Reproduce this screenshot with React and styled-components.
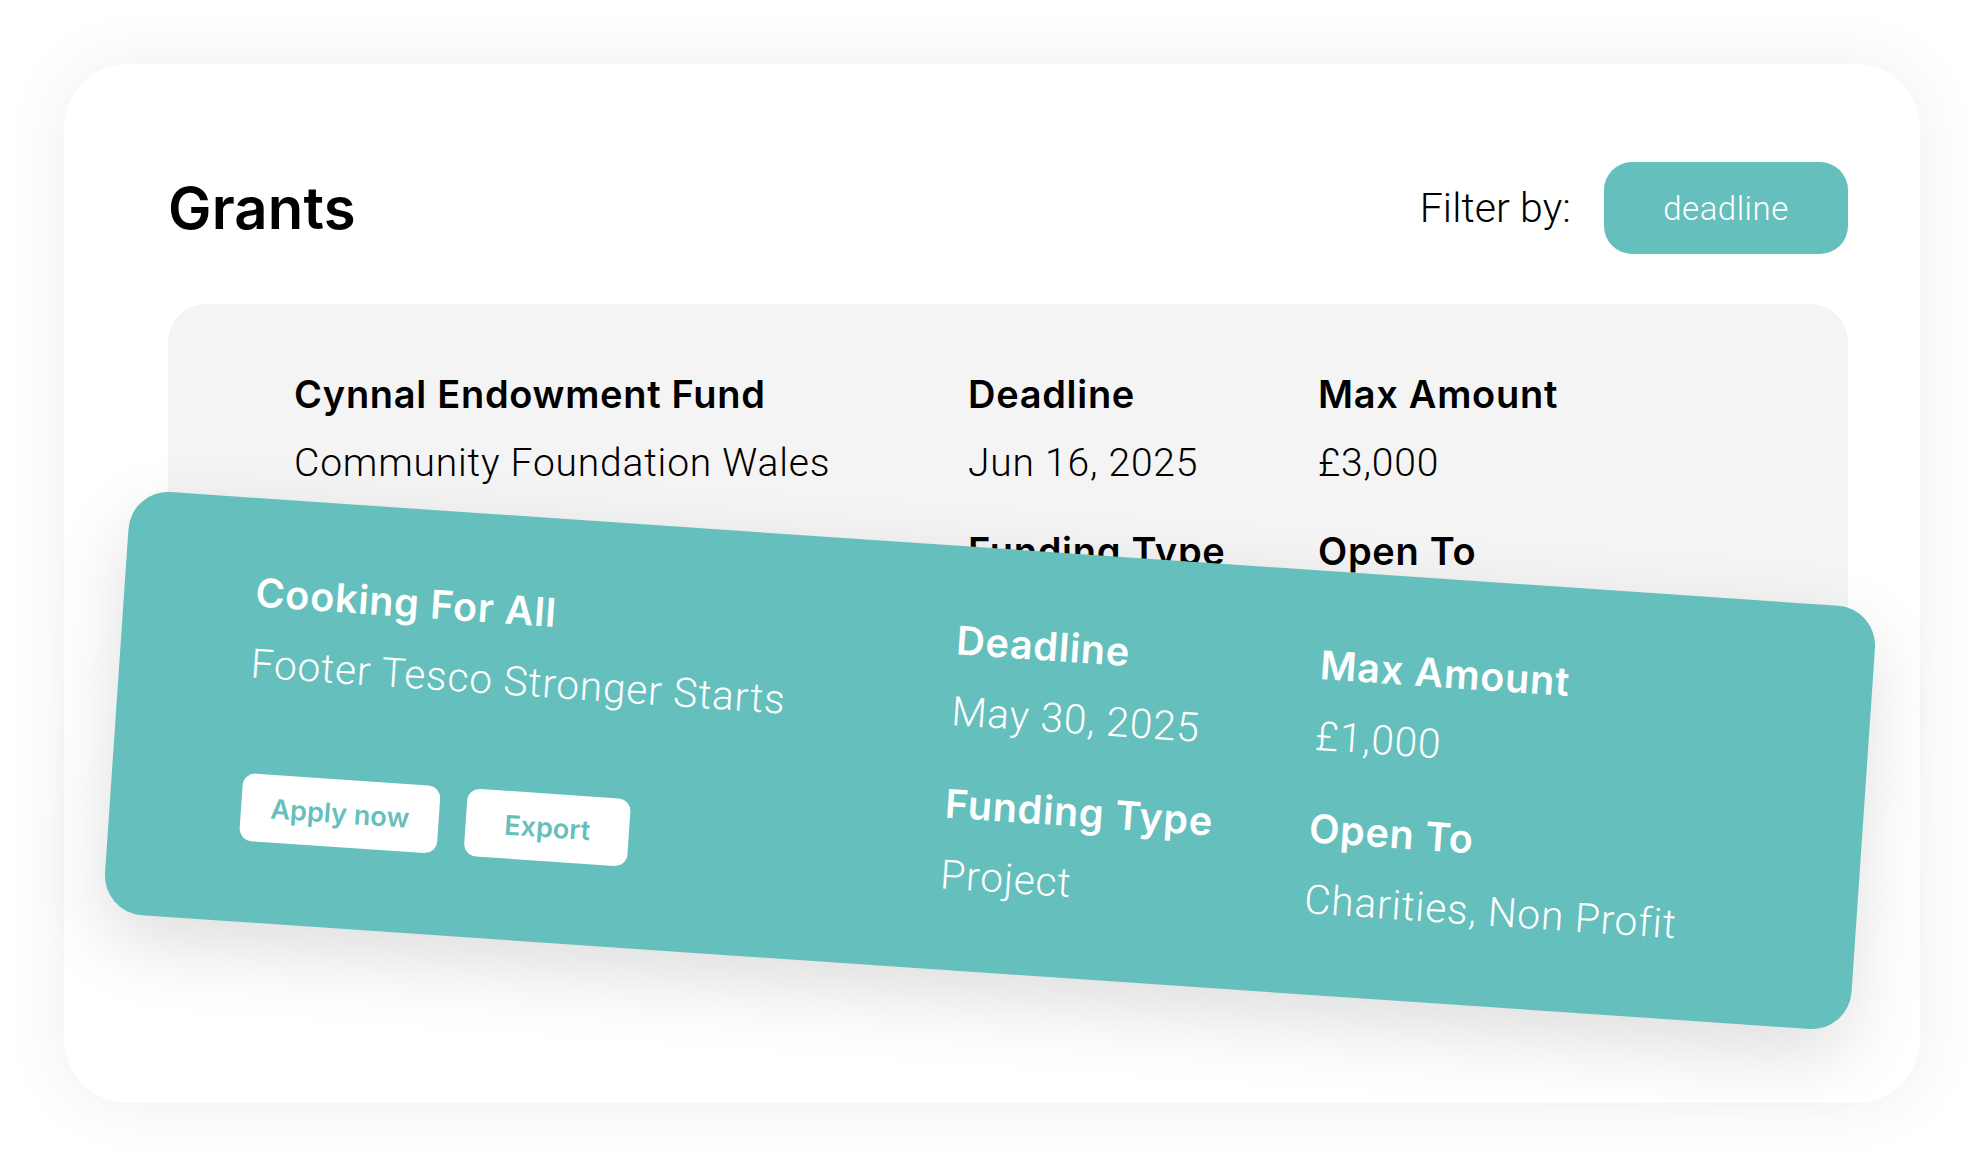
import styled, { createGlobalStyle, css } from 'styled-components';

const TEAL = '#65bfbc';
const LIGHT_FONT = 'Roboto, "Noto Sans", sans-serif';

const GlobalStyle = createGlobalStyle`
	html, body {
		margin: 0;
		padding: 0;
		background: #fff;
	}
	body {
		font-family: Inter, "Noto Sans", sans-serif;
		-webkit-font-smoothing: antialiased;
	}
	* {
		box-sizing: border-box;
	}
`;

const Page = styled.div`
	padding: 64px;
	width: 100%;
	min-height: 100vh;
`;

const Panel = styled.section`
	height: 1039px;
	background: #fff;
	border-radius: 64px;
	box-shadow: 0 0 64px rgba(40, 52, 90, 0.08);
	padding: 98px 72px 0 104px;
`;

const Header = styled.header`
	display: flex;
	align-items: center;
	justify-content: space-between;
	height: 92px;
	margin-bottom: 50px;
`;

const Title = styled.h1`
	margin: 0;
	font-size: 58px;
	font-weight: 600;
	letter-spacing: 0.2px;
	color: #000;
`;

const Filter = styled.div`
	display: flex;
	align-items: center;
	gap: 33px;
`;

const FilterLabel = styled.span`
	font-family: ${LIGHT_FONT};
	font-size: 41px;
	font-weight: 300;
	letter-spacing: 0.1px;
	color: #000;
`;

const FilterButton = styled.button`
	width: 244px;
	height: 92px;
	border: 0;
	border-radius: 28px;
	background: ${TEAL};
	color: #fff;
	font-family: ${LIGHT_FONT};
	font-size: 33px;
	font-weight: 300;
	letter-spacing: 0.5px;
	cursor: pointer;
`;

const List = styled.div`
	display: flex;
	flex-direction: column;
`;

const Card = styled.article`
	display: grid;
	grid-template-columns: 674px 350px 1fr;
	padding: 62px 0 62px 126px;
	border-radius: 38px;
	background: #f4f4f4;
	color: #000;

	${(p) =>
		p.$active &&
		css`
			margin-top: -154px;
			background: ${TEAL};
			color: #fff;
			transform: translateX(-18px) rotate(3.9deg) scale(1.042);
			box-shadow: 0 26px 70px rgba(0, 0, 0, 0.13);
		`}
`;

const Column = styled.div`
	display: flex;
	flex-direction: column;
	gap: 31px;
`;

const Field = styled.div`
	display: flex;
	flex-direction: column;
	gap: 12px;
`;

const Label = styled.div`
	font-size: 38px;
	line-height: 57px;
	font-weight: 600;
	letter-spacing: 0.7px;
	white-space: nowrap;
`;

const Value = styled.div`
	font-family: ${LIGHT_FONT};
	font-size: 39px;
	line-height: 57px;
	font-weight: 300;
	letter-spacing: 0.8px;
	white-space: nowrap;
`;

const Actions = styled.div`
	display: flex;
	gap: 26px;
	margin-top: 64px;
`;

const ActionButton = styled.button`
	width: ${(p) => p.$width}px;
	height: 65px;
	border: 0;
	border-radius: 12px;
	background: #fff;
	color: ${TEAL};
	font-family: inherit;
	font-size: 26px;
	font-weight: 600;
	cursor: pointer;
`;

const grants = [
	{
		name: 'Cynnal Endowment Fund',
		funder: 'Community Foundation Wales',
		deadline: 'Jun 16, 2025',
		amount: '£3,000',
		type: 'Project',
		openTo: 'Charities'
	},
	{
		name: 'Cooking For All',
		funder: 'Footer Tesco Stronger Starts',
		deadline: 'May 30, 2025',
		amount: '£1,000',
		type: 'Project',
		openTo: 'Charities, Non Profit',
		active: true
	}
];

const GrantCard = ({ grant }) => (
	<Card $active={grant.active}>
		<Field>
			<Label>{grant.name}</Label>
			<Value>{grant.funder}</Value>
			<Actions>
				<ActionButton $width={190}>Apply now</ActionButton>
				<ActionButton $width={157}>Export</ActionButton>
			</Actions>
		</Field>
		<Column>
			<Field>
				<Label>Deadline</Label>
				<Value>{grant.deadline}</Value>
			</Field>
			<Field>
				<Label>Funding Type</Label>
				<Value>{grant.type}</Value>
			</Field>
		</Column>
		<Column>
			<Field>
				<Label>Max Amount</Label>
				<Value>{grant.amount}</Value>
			</Field>
			<Field>
				<Label>Open To</Label>
				<Value>{grant.openTo}</Value>
			</Field>
		</Column>
	</Card>
);

export default function App() {
	return (
		<Page>
			<GlobalStyle />
			<Panel>
				<Header>
					<Title>Grants</Title>
					<Filter>
						<FilterLabel>Filter by:</FilterLabel>
						<FilterButton>deadline</FilterButton>
					</Filter>
				</Header>
				<List>
					{grants.map((g) => (
						<GrantCard key={g.name} grant={g} />
					))}
				</List>
			</Panel>
		</Page>
	);
}
